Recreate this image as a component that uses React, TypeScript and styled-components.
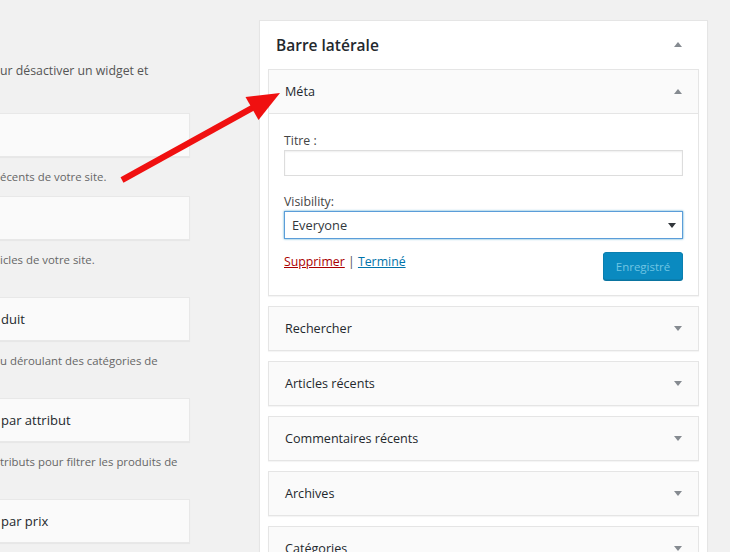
import React from 'react'
import styled, { createGlobalStyle } from 'styled-components'

const GlobalStyle = createGlobalStyle`
  html, body {
    margin: 0;
    padding: 0;
    background: #f1f1f1;
    overflow: hidden;
  }
  body {
    font-family: 'Open Sans', 'Noto Sans', 'Liberation Sans', sans-serif;
    font-size: 12.3px;
    color: #444;
  }
`

const Page = styled.div`
  position: relative;
  display: flex;
  align-items: flex-start;
  width: 730px;
  height: 552px;
  overflow: hidden;
`

const LeftColumn = styled.div`
  flex-shrink: 0;
  width: 200px;
  margin-left: -10px;
  padding-top: 61px;
`

const Intro = styled.p`
  margin: 0 0 32px;
  padding-left: 10px;
  line-height: 20px;
  white-space: nowrap;
  color: #555;
`

const WidgetItem = styled.div<{ $gap: number }>`
  margin-bottom: ${p => p.$gap}px;
`

const WidgetBox = styled.div`
  display: flex;
  align-items: center;
  height: 42px;
  padding-left: 10px;
  background: #fafafa;
  border: 1px solid #e8e8e8;
  box-shadow: 0 1px 1px rgba(0, 0, 0, 0.04);
  font-size: 13px;
  color: #23282d;
  white-space: nowrap;
`

const WidgetDesc = styled.p`
  margin: 10px 0 0;
  padding-left: 10px;
  line-height: 20px;
  font-size: 11.4px;
  white-space: nowrap;
  color: #666;
`

const Sidebar = styled.div`
  flex-shrink: 0;
  width: 431px;
  min-height: 560px;
  margin: 20px 0 0 69px;
  padding: 0 8px;
  background: #fff;
  border: 1px solid #e5e5e5;
  box-shadow: 0 1px 1px rgba(0, 0, 0, 0.04);
`

const SidebarHeader = styled.div`
  display: flex;
  align-items: center;
  justify-content: space-between;
  height: 49px;
  margin-top: -1px;
  padding: 0 17px 0 8px;
`

const SidebarTitle = styled.h2`
  margin: 0;
  font-size: 15.5px;
  font-weight: 600;
  color: #23282d;
`

const Widget = styled.div<{ $open?: boolean }>`
  margin-bottom: 10px;
  background: ${p => (p.$open ? '#fff' : '#fafafa')};
  border: 1px solid #e5e5e5;
  box-shadow: 0 1px 1px rgba(0, 0, 0, 0.04);
`

const WidgetTop = styled.div<{ $open?: boolean }>`
  display: flex;
  align-items: center;
  justify-content: space-between;
  height: 43px;
  padding: 0 16px 0 16px;
  background: #fafafa;
  border-bottom: ${p => (p.$open ? '1px solid #e5e5e5' : 'none')};
  font-size: 12.6px;
  color: #23282d;
`

const WidgetBody = styled.div`
  padding: 17px 15px 15px;
`

const Label = styled.label<{ $spaced?: boolean }>`
  display: block;
  margin-top: ${p => (p.$spaced ? 16 : 0)}px;
  line-height: 19px;
  color: #444;
`

const TextInput = styled.input`
  display: block;
  box-sizing: border-box;
  width: 100%;
  height: 26px;
  margin: 0;
  border: 1px solid #ddd;
  box-shadow: inset 0 1px 2px rgba(0, 0, 0, 0.07);
  outline: none;
`

const SelectBox = styled.div`
  display: flex;
  align-items: center;
  justify-content: space-between;
  box-sizing: border-box;
  height: 28px;
  padding: 0 6px 0 7px;
  border: 1px solid #5b9dd9;
  box-shadow: 0 0 2px rgba(30, 140, 190, 0.8);
  font-size: 12.8px;
  color: #32373c;
`

const Footer = styled.div`
  display: flex;
  align-items: flex-start;
  justify-content: space-between;
  margin-top: 13px;
`

const Links = styled.div`
  line-height: 20px;
  color: #555;
`

const LinkText = styled.a<{ $danger?: boolean }>`
  color: ${p => (p.$danger ? '#a00' : '#0073aa')};
  text-decoration: underline;
`

const SaveButton = styled.button`
  box-sizing: border-box;
  width: 80px;
  height: 28px;
  padding: 0;
  border: 1px solid #0a7fb0;
  border-radius: 3px;
  background: #0a8ac0;
  box-shadow: 0 1px 0 #0a74a0;
  color: #70c5e3;
  font-family: inherit;
  font-size: 11.5px;
`

const Overlay = styled.svg`
  position: absolute;
  left: 0;
  top: 0;
  pointer-events: none;
`

const Caret = ({ up, color = '#858a90' }: { up?: boolean; color?: string }) => (
  <svg width="8" height="5" viewBox="0 0 8 5">
    <polygon points={up ? '0,5 8,5 4,0' : '0,0 8,0 4,5'} fill={color} />
  </svg>
)

const leftItems = [
  { title: '', desc: 'écents de votre site.', gap: 9 },
  { title: '', desc: 'icles de votre site.', gap: 27 },
  { title: 'duit', desc: 'u déroulant des catégories de', gap: 27 },
  { title: 'par attribut', desc: 'tributs pour filtrer les produits de', gap: 27 },
  { title: 'par prix', desc: '', gap: 0 },
]

const collapsed = ['Rechercher', 'Articles récents', 'Commentaires récents', 'Archives', 'Catégories']

const App = () => (
  <>
    <GlobalStyle />
    <Page>
      <LeftColumn>
        <Intro>ur désactiver un widget et</Intro>
        {leftItems.map((item, i) => (
          <WidgetItem key={i} $gap={item.gap}>
            <WidgetBox>{item.title}</WidgetBox>
            {item.desc && <WidgetDesc>{item.desc}</WidgetDesc>}
          </WidgetItem>
        ))}
      </LeftColumn>

      <Sidebar>
        <SidebarHeader>
          <SidebarTitle>Barre latérale</SidebarTitle>
          <Caret up />
        </SidebarHeader>

        <Widget $open>
          <WidgetTop $open>
            <span>Méta</span>
            <Caret up />
          </WidgetTop>
          <WidgetBody>
            <Label>Titre :</Label>
            <TextInput />
            <Label $spaced>Visibility:</Label>
            <SelectBox>
              <span>Everyone</span>
              <Caret color="#32373c" />
            </SelectBox>
            <Footer>
              <Links>
                <LinkText $danger>Supprimer</LinkText> | <LinkText>Terminé</LinkText>
              </Links>
              <SaveButton disabled>Enregistré</SaveButton>
            </Footer>
          </WidgetBody>
        </Widget>

        {collapsed.map(name => (
          <Widget key={name}>
            <WidgetTop>
              <span>{name}</span>
              <Caret />
            </WidgetTop>
          </Widget>
        ))}
      </Sidebar>

      <Overlay width="730" height="552">
        <line x1="122" y1="180" x2="254" y2="107" stroke="#f01010" strokeWidth="6" />
        <polygon points="280,93 245.5,97 258.5,120" fill="#f01010" />
      </Overlay>
    </Page>
  </>
)

export default App
